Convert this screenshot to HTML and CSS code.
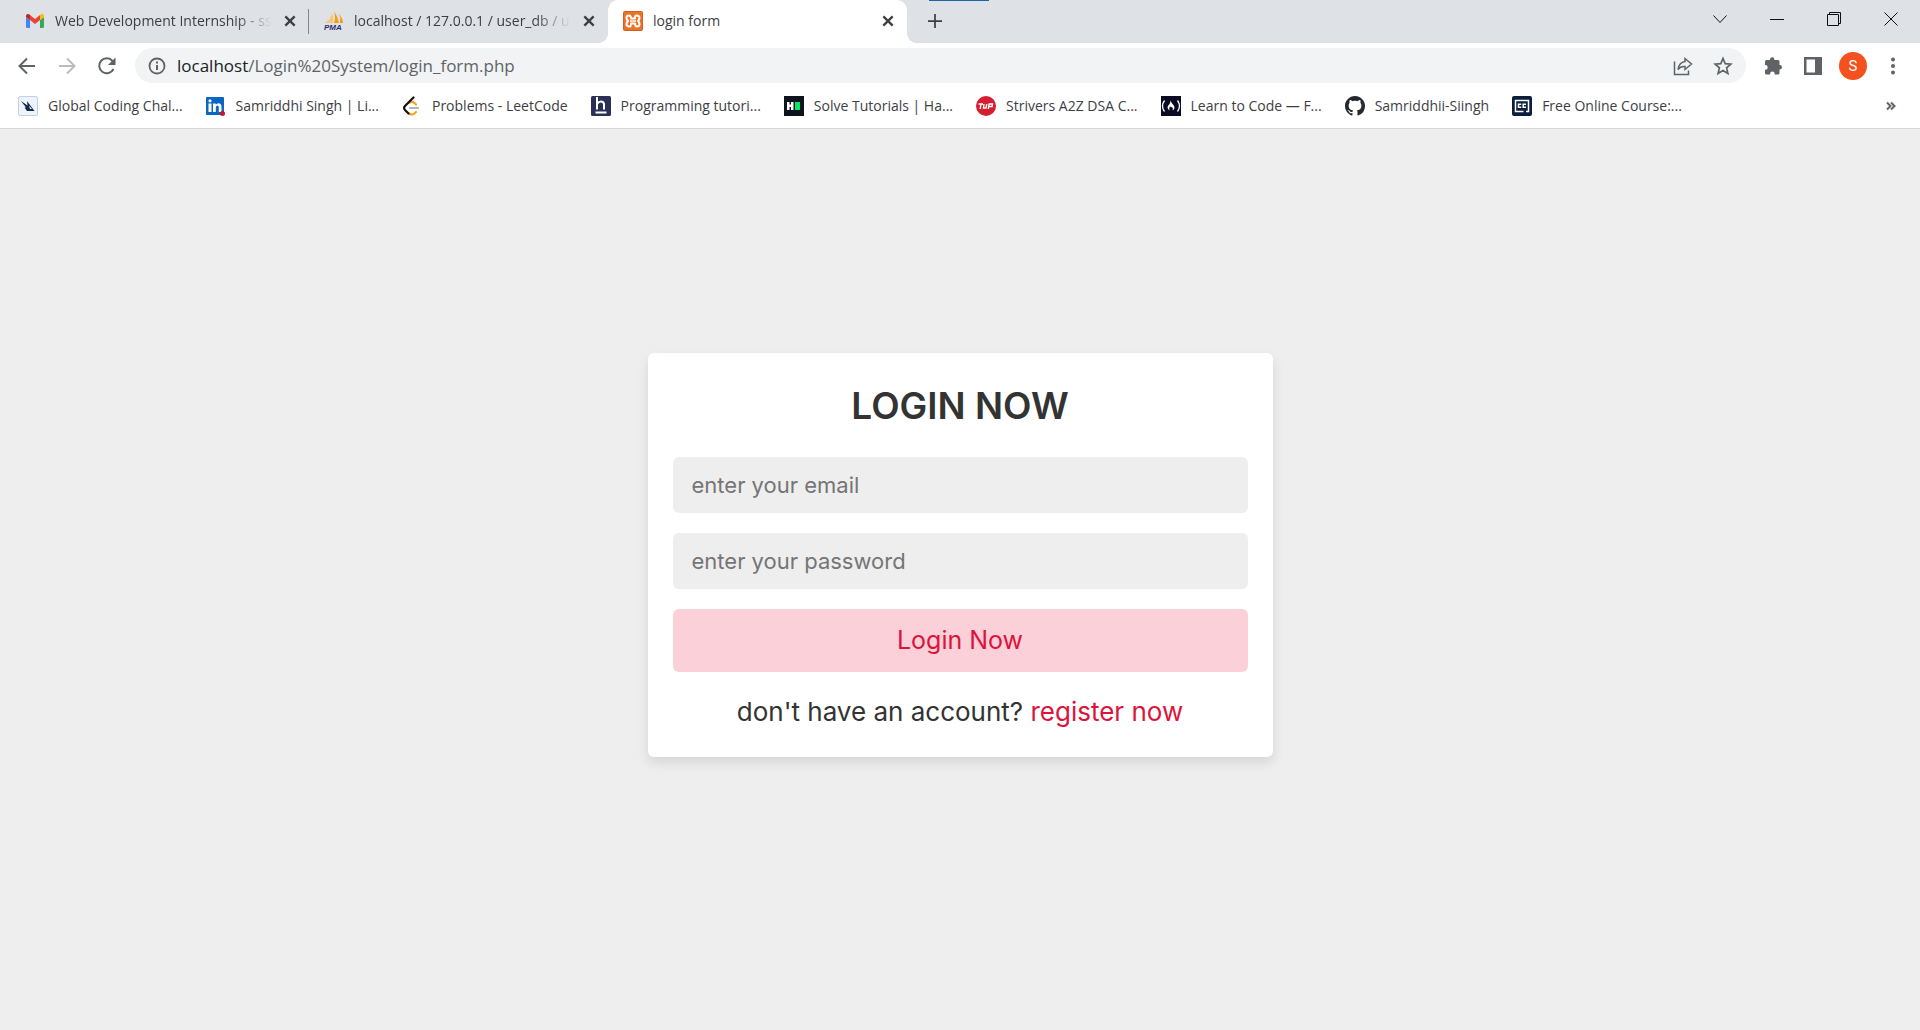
FILE: index.html
```html
<!DOCTYPE html>
<html lang="en">
<head>
<meta charset="utf-8">
<meta name="viewport" content="width=device-width, initial-scale=1">
<title>login form</title>
<link rel="stylesheet" href="styles.css">
</head>
<body>
<header class="browser">
  <div class="tab-strip">
    <div class="top-edge"></div>
    <div class="tab divided">
      <svg class="icon" viewBox="0 0 20 20"><path fill="#4285f4" d="M1 6l4 3v8H2.500Q1 17 1 15.500z"/><path fill="#34a853" d="M15 9l4-3v9.500Q19 17 17.500 17H15z"/><path fill="#ea4335" d="M5 4l5 4 5-4v5l-5 4-5-4z"/><path fill="#c5221f" d="M1 5Q1 3 3 3q1 0 2 1v5L1 6z"/><path fill="#fbbc04" d="M19 5q0-2-2-2-1 0-2 1v5l4-3z"/></svg>
      <span class="tab-title faded">Web Development Internship - ss</span>
      <button class="tab-close" aria-label="Close tab"><svg viewBox="0 0 12 12"><path d="M2 2l8 8M10 2l-8 8"/></svg></button>
    </div>
    <div class="tab">
      <svg class="icon" viewBox="0 0 20 20"><path fill="#f89c0e" d="M10 0Q14 6 15 12H10Q12 7 10 0zM15 3q4 5 4 9h-3q1-5-1-9z"/><path fill="#fbc476" d="M8 2Q6 9 2 12h7Q10 7 8 2zM4 6Q4 10 1 12h2z"/><text x="0" y="19" class="logo-text">PMA</text></svg>
      <span class="tab-title faded">localhost / 127.0.0.1 / user_db / u</span>
      <button class="tab-close" aria-label="Close tab"><svg viewBox="0 0 12 12"><path d="M2 2l8 8M10 2l-8 8"/></svg></button>
    </div>
    <div class="tab active">
      <svg class="icon" viewBox="0 0 20 20"><rect width="20" height="20" rx="2" fill="#c7622a"/><rect x="1" y="1" width="18" height="18" rx="1" fill="#ee7226"/><path d="M8 7.500Q8 4.500 5.800 4.500T3.500 6.800Q3.500 8.500 5 10 3.500 11.500 3.500 13.200T5.800 15.500 8 12.500h4Q12 15.500 14.200 15.500t2.300-2.300Q16.500 11.500 15 10q1.500-1.500 1.500-3.200T14.200 4.500 12 7.500z" fill="none" stroke="#fff" stroke-width="2" stroke-linejoin="round"/><path d="M7 10h6" stroke="#fff" stroke-width="1.500"/></svg>
      <span class="tab-title">login form</span>
      <button class="tab-close" aria-label="Close tab"><svg viewBox="0 0 12 12"><path d="M2 2l8 8M10 2l-8 8"/></svg></button>
    </div>
    <button class="new-tab" aria-label="New tab"><svg viewBox="0 0 16 16"><path d="M8 0v16M0 8h16"/></svg></button>
    <div class="window-controls">
      <button aria-label="Search tabs"><svg viewBox="0 0 14 14"><path d="M.5 3.500l6.500 7 6.500-7"/></svg></button>
      <button aria-label="Minimize"><svg viewBox="0 0 14 14"><path d="M0 7.500h14"/></svg></button>
      <button aria-label="Restore"><svg viewBox="0 0 14 14"><path d="M.5 2.500h11v11H.5zM2.500 2.500v-2h11v11h-2"/></svg></button>
      <button aria-label="Close"><svg viewBox="0 0 14 14"><path d="M.5.500l13 13M13.500.500l-13 13"/></svg></button>
    </div>
  </div>

  <div class="toolbar">
    <button class="tool" aria-label="Back"><svg class="icon" viewBox="0 0 20 20"><path d="M18 10H3M10 2.500L2.500 10l7.500 7.500" fill="none" stroke="#5f6368" stroke-width="2"/></svg></button>
    <button class="tool" aria-label="Forward"><svg class="icon" viewBox="0 0 20 20"><path d="M2 10h15M10 2.500l7.500 7.500-7.500 7.500" fill="none" stroke="#babcbe" stroke-width="2"/></svg></button>
    <button class="tool" aria-label="Reload"><svg class="icon" viewBox="0 0 20 20"><path d="M16.500 13A7.500 7.500 0 1 1 15.500 5" fill="none" stroke="#5f6368" stroke-width="2"/><path d="M18.500 1.500v7.500H11z" fill="#5f6368"/></svg></button>
    <div class="address-bar">
      <svg class="icon" viewBox="0 0 20 20"><circle cx="10" cy="10" r="7.500" fill="none" stroke="#5f6368" stroke-width="1.800"/><path d="M10 9v5M10 5.500v2" stroke="#5f6368" stroke-width="2"/></svg>
      <div class="url" role="textbox" contenteditable="true" spellcheck="false" aria-label="Address"><span class="host">localhost</span>/Login%20System/login_form.php</div>
      <button class="tool" aria-label="Share"><svg class="icon" viewBox="0 0 20 20"><path d="M1.500 5.500v13h14v-4M12 2.500L18.500 8 12 13.500v-3Q7.500 10 5 13.500 6 6.500 12 5.500z" fill="none" stroke="#5f6368" stroke-width="1.500"/></svg></button>
      <button class="tool" aria-label="Bookmark"><svg class="icon" viewBox="0 0 20 20"><path d="M10 2.500l2.200 5.200 5.600.500-4.200 3.700 1.300 5.500-4.900-2.900-4.900 2.900 1.300-5.500L2.200 8.200l5.600-.500z" fill="none" stroke="#5f6368" stroke-width="1.700"/></svg></button>
    </div>
    <div class="extensions">
      <button class="tool" aria-label="Extensions"><svg class="icon" viewBox="0 0 20 20"><path fill="#5f6368" d="M2 5.500Q2 4 3.500 4H7v-.500a2.200 2.200 0 0 1 4.400 0V4H15q1.500 0 1.500 1.500V9h.300a2.200 2.200 0 0 1 0 4.400h-.300V17q0 1.500-1.500 1.500h-3.300v-.600a2.300 2.300 0 0 0-4.600 0v.600H3.500Q2 18.500 2 17v-3.300h.400a2.300 2.300 0 0 0 0-4.600H2z"/></svg></button>
      <button class="tool" aria-label="Side panel"><svg class="icon" viewBox="0 0 20 20"><path fill="#5f6368" fill-rule="evenodd" d="M1 1h18v18H1zM3.500 3.500v13H12v-13z"/></svg></button>
      <button class="tool avatar" aria-label="Profile">S</button>
      <button class="tool" aria-label="Menu"><svg class="icon" viewBox="0 0 20 20" fill="#5f6368"><circle cx="10" cy="3.500" r="2"/><circle cx="10" cy="10" r="2"/><circle cx="10" cy="16.500" r="2"/></svg></button>
    </div>
  </div>

  <nav class="bookmarks" aria-label="Bookmarks">
    <a href="#"><svg class="icon" viewBox="0 0 20 20"><rect x=".5" y=".5" width="19" height="19" rx="1.500" fill="#eef4fb" stroke="#c3d0e2"/><path fill="#10284b" d="M3 5l6.500 4.500L9 5l7.500 10H9L6.500 11.500 8 11.500z"/><path d="M11 9.500l1 3.500h2z" fill="#eef4fb"/></svg>Global Coding Chal...</a>
    <a href="#"><svg class="icon" viewBox="0 0 20 20"><rect y="1" width="18" height="18" rx="1" fill="#0a66c2"/><path fill="#fff" d="M2.500 7.500h3V16h-3zM7 7.500h2.700v1.200q1-1.500 2.800-1.500 3 0 3 3.800v5h-2.700v-4.500q0-2-1.400-2T9.800 11.500V16H7z"/><circle cx="4" cy="4.800" r="1.600" fill="#fff"/><circle cx="16.500" cy="17.500" r="2.500" fill="#cb112d"/></svg>Samriddhi Singh | Li...</a>
    <a href="#"><svg class="icon" viewBox="0 0 20 20" fill="none" stroke-width="2.200" stroke-linecap="round"><path stroke="#ffa116" d="M7 7q3-2.500 5.500 0l1.500 1.500M7 17.500q3 2 5.500 0l1.500-1.500"/><path stroke="#111" d="M11.500 1.500L3 10q-1.800 2 0 4l3.500 3.500"/><path stroke="#b3b3b3" d="M8 12h8"/></svg>Problems - LeetCode</a>
    <a href="#"><svg class="icon" viewBox="0 0 20 20"><rect width="20" height="20" rx="1.500" fill="#2a3155"/><path d="M6 1v12.500M6 8q1.500-2.500 4-2.500t3 2.500v5.500M4.500 16.500h11" fill="none" stroke="#fff" stroke-width="2"/></svg>Programming tutori...</a>
    <a href="#"><svg class="icon" viewBox="0 0 20 20"><rect width="20" height="20" fill="#0e141e"/><path fill="#fff" d="M3 6h2.500v2.500h1.500V6h2.500v8H7v-3H5.500v3H3z"/><path fill="#00ea64" d="M11 6h5v8h-5z"/></svg>Solve Tutorials | Ha...</a>
    <a href="#"><svg class="icon" viewBox="0 0 20 20"><circle cx="10" cy="10" r="10" fill="#d41f30"/><path d="M2.500 8H7M5 8l-.800 5M8 8l-.600 4H10l.800-4M12.300 13l.800-5h3.400l-.400 2.500H13" fill="none" stroke="#fff" stroke-width="1.400"/></svg>Strivers A2Z DSA C...</a>
    <a href="#"><svg class="icon" viewBox="0 0 20 20"><rect width="20" height="20" fill="#0a0a23"/><path d="M3.500 4.500Q-.5 10 3.500 15.500M16.500 4.500q4 5.500 0 11" fill="none" stroke="#fff" stroke-width="1.300"/><path fill="#fff" d="M9.500 4.500q1 2.500 2.500 4t1.500 3.200q0 1.800-2 2.800 1-2-.500-3.500l-1.200.300-.800-1q-1.500 2.500 0 4.200-2.500-1-2.500-3T8.500 8Q9.500 6.500 9.500 4.500z"/></svg>Learn to Code — F...</a>
    <a href="#"><svg class="icon" viewBox="0 0 16 16"><path fill="#24292f" d="M8 0C3.580 0 0 3.580 0 8c0 3.540 2.290 6.530 5.470 7.590.4.070.55-.17.55-.38 0-.19-.01-.82-.01-1.490-2.010.37-2.530-.49-2.690-.94-.09-.23-.48-.94-.82-1.130-.28-.15-.68-.52-.01-.53.63-.01 1.080.58 1.230.82.72 1.210 1.870.87 2.330.66.07-.52.28-.87.51-1.070-1.780-.2-3.640-.89-3.640-3.950 0-.87.31-1.590.82-2.150-.08-.2-.36-1.020.08-2.120 0 0 .67-.21 2.200.82.64-.18 1.320-.27 2-.27s1.360.09 2 .27c1.530-1.040 2.200-.82 2.200-.82.44 1.100.16 1.920.08 2.120.51.56.82 1.270.82 2.150 0 3.070-1.870 3.750-3.650 3.950.29.25.54.73.54 1.480 0 1.070-.01 1.930-.01 2.200 0 .21.15.46.55.38A8.010 8.010 0 0 0 16 8c0-4.420-3.580-8-8-8z"/></svg>Samriddhii-Siingh</a>
    <a href="#"><svg class="icon" viewBox="0 0 20 20"><rect width="20" height="20" rx="2" fill="#0b1f3d"/><path d="M11.500 15.500h-8v-11h13v11h-2.500" fill="none" stroke="#fff" stroke-width="1.500"/><path d="M9.300 8.300H6.500v3h2.800M14 8.300h-2.800v3H14" fill="none" stroke="#fff" stroke-width="1.500"/></svg>Free Online Course:...</a>
    <button class="overflow" aria-label="More bookmarks"><svg viewBox="0 0 10 10"><path d="M1 1.500L4.500 5 1 8.500M5 1.500L8.500 5 5 8.500"/></svg></button>
  </nav>
</header>

<main class="page">
  <form class="login-card">
    <h1>LOGIN NOW</h1>
    <input type="email" placeholder="enter your email" aria-label="Email">
    <input type="password" placeholder="enter your password" aria-label="Password">
    <button class="submit" type="submit">Login Now</button>
    <p>don't have an account? <a href="#">register now</a></p>
  </form>
</main>
</body>
</html>
```

FILE: styles.css
```css
* {
  box-sizing: border-box;
}

body {
  display: flex;
  flex-direction: column;
  min-height: 100vh;
  margin: 0;
  background: #eee;
  font-family: "Open Sans", "Noto Sans", sans-serif;
}

button {
  display: flex;
  align-items: center;
  justify-content: center;
  padding: 0;
  border: 0;
  background: none;
  font: inherit;
}

a {
  text-decoration: none;
}

.icon {
  flex: none;
  display: block;
  width: 20px;
  height: 20px;
}

/* Browser frame */
.browser {
  background: #fff;
  border-bottom: 1px solid #d5d7da;
  color: #3c4043;
  font-size: 14px;
}

.tab-strip {
  position: relative;
  display: flex;
  height: 43px;
  padding-left: 10px;
  background: #dee1e6;
}

.top-edge {
  position: absolute;
  top: 0;
  left: 929px;
  width: 60px;
  height: 1px;
  background: #1d64a8;
}

.tab {
  position: relative;
  display: flex;
  align-items: center;
  gap: 10px;
  width: 299px;
  height: 43px;
  padding: 0 11px 2px 15px;
}

.tab.divided::after {
  content: "";
  position: absolute;
  top: 9px;
  right: 0;
  width: 1px;
  height: 25px;
  background: #80868b;
}

.tab.active {
  background: #fff;
  border-radius: 10px 10px 0 0;
}

.tab.active::before,
.tab.active::after {
  content: "";
  position: absolute;
  bottom: 0;
  width: 10px;
  height: 10px;
}

.tab.active::before {
  right: 100%;
  background: radial-gradient(circle at 0 0, transparent 10px, #fff 10px);
}

.tab.active::after {
  left: 100%;
  background: radial-gradient(circle at 100% 0, transparent 10px, #fff 10px);
}

.tab-title {
  flex: 1;
  line-height: 22px;
  white-space: nowrap;
}

.tab-title.faded {
  mask-image: linear-gradient(to left, transparent, #000 36px);
}

.tab-close {
  width: 16px;
  height: 16px;
}

.tab-close svg,
.new-tab svg {
  width: 14px;
  height: 14px;
  fill: none;
  stroke: #3c4043;
  stroke-width: 2;
}

.new-tab {
  width: 35px;
  height: 41px;
  margin-left: 10px;
}

.window-controls {
  display: flex;
  height: 37px;
  margin-left: auto;
  padding-right: 1px;
}

.window-controls button {
  width: 57px;
}

.window-controls svg {
  width: 14px;
  height: 14px;
  fill: none;
  stroke: #111;
}

.toolbar {
  display: flex;
  align-items: center;
  height: 45px;
  padding: 0 7px;
}

.tool {
  flex: none;
  width: 40px;
  height: 34px;
}

.address-bar {
  flex: 1;
  display: flex;
  align-items: center;
  height: 35px;
  margin: 0 7px 0 8px;
  padding: 0 3px 0 12px;
  border-radius: 18px;
  background: #f1f3f4;
}

.url {
  flex: 1;
  margin-left: 10px;
  color: #5f6368;
  font-size: 17px;
  line-height: 24px;
  outline: none;
}

.host {
  color: #202124;
}

.extensions {
  display: flex;
  align-items: center;
}

.avatar {
  width: 28px;
  height: 28px;
  margin: 0 6px;
  border-radius: 50%;
  background: #f4511e;
  color: #fff;
  font-family: Roboto, sans-serif;
  font-size: 15px;
}

.bookmarks {
  display: flex;
  align-items: center;
  gap: 23px;
  height: 40px;
  padding: 0 24px 4px 18px;
}

.bookmarks a {
  display: flex;
  align-items: center;
  gap: 10px;
  color: #3c4043;
  line-height: 22px;
  white-space: nowrap;
}

.overflow {
  width: 10px;
  margin-left: auto;
}

.overflow svg {
  width: 10px;
  height: 10px;
  fill: none;
  stroke: #5f6368;
  stroke-width: 2;
}

.logo-text {
  fill: #2d2f6b;
  font: italic bold 8px "Liberation Sans", sans-serif;
}

/* Login page */
.page {
  flex: 1;
  display: flex;
  align-items: center;
  justify-content: center;
  padding: 25px 25px 75px;
  color: #333;
  font-family: Inter, sans-serif;
}

.login-card {
  display: flex;
  flex-direction: column;
  gap: 20px;
  width: 625px;
  padding: 25px;
  border-radius: 6px;
  background: #fff;
  box-shadow: 0 6px 12px rgba(0, 0, 0, 0.1);
  text-align: center;
}

.login-card h1 {
  margin: 0 0 3px;
  font-size: 37px;
  font-weight: 600;
  line-height: 56px;
}

.login-card input {
  width: 100%;
  height: 56px;
  padding: 0 19px;
  border: 0;
  border-radius: 6px;
  background: #eee;
  font-family: inherit;
  font-size: 22px;
}

.login-card input::placeholder {
  color: #757575;
}

.submit {
  height: 63px;
  border-radius: 6px;
  background: #fbd0d9;
  color: crimson;
  font-size: 25px;
}

.login-card p {
  margin: 0;
  font-size: 26px;
  line-height: 40px;
}

.login-card p a {
  color: crimson;
}
```
